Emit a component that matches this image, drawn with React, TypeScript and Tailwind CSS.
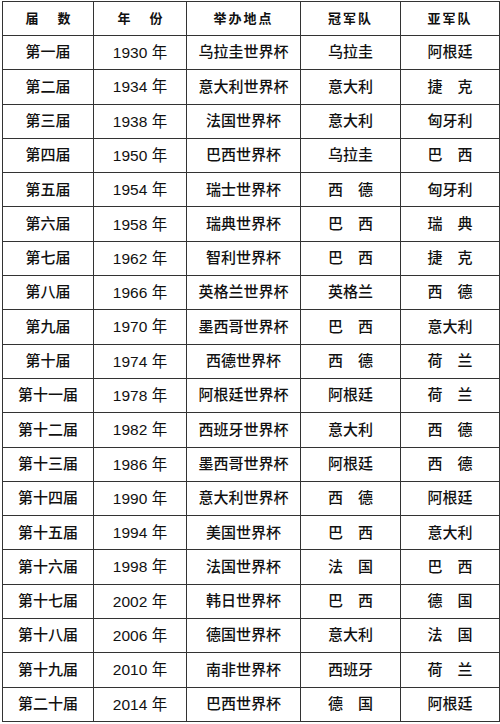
const rows: [string, string, string, string, string][] = [
  ["第一届", "1930", "乌拉圭世界杯", "乌拉圭", "阿根廷"],
  ["第二届", "1934", "意大利世界杯", "意大利", "捷　克"],
  ["第三届", "1938", "法国世界杯", "意大利", "匈牙利"],
  ["第四届", "1950", "巴西世界杯", "乌拉圭", "巴　西"],
  ["第五届", "1954", "瑞士世界杯", "西　德", "匈牙利"],
  ["第六届", "1958", "瑞典世界杯", "巴　西", "瑞　典"],
  ["第七届", "1962", "智利世界杯", "巴　西", "捷　克"],
  ["第八届", "1966", "英格兰世界杯", "英格兰", "西　德"],
  ["第九届", "1970", "墨西哥世界杯", "巴　西", "意大利"],
  ["第十届", "1974", "西德世界杯", "西　德", "荷　兰"],
  ["第十一届", "1978", "阿根廷世界杯", "阿根廷", "荷　兰"],
  ["第十二届", "1982", "西班牙世界杯", "意大利", "西　德"],
  ["第十三届", "1986", "墨西哥世界杯", "阿根廷", "西　德"],
  ["第十四届", "1990", "意大利世界杯", "西　德", "阿根廷"],
  ["第十五届", "1994", "美国世界杯", "巴　西", "意大利"],
  ["第十六届", "1998", "法国世界杯", "法　国", "巴　西"],
  ["第十七届", "2002", "韩日世界杯", "巴　西", "德　国"],
  ["第十八届", "2006", "德国世界杯", "意大利", "法　国"],
  ["第十九届", "2010", "南非世界杯", "西班牙", "荷　兰"],
  ["第二十届", "2014", "巴西世界杯", "德　国", "阿根廷"],
];

const cell = "border border-[#333] text-center align-middle p-0";

export default function App() {
  return (
    <div className="w-[500px] h-[724px] bg-white overflow-hidden pt-[1px] pl-[2px] font-['Liberation_Sans','Noto_Sans_CJK_SC',sans-serif] text-[#111]">
      <table className="table-fixed border-collapse w-[497px]">
        <colgroup>
          <col className="w-[91px]" />
          <col className="w-[93px]" />
          <col className="w-[114px]" />
          <col className="w-[100px]" />
          <col className="w-[99px]" />
        </colgroup>
        <thead>
          <tr className="h-[34px] text-[13px] font-black">
            <th className={cell}>
              <span>届</span>
              <span className="ml-[19px]">数</span>
            </th>
            <th className={cell}>
              <span>年</span>
              <span className="ml-[19px]">份</span>
            </th>
            <th className={`${cell} tracking-[2px]`}>举办地点</th>
            <th className={`${cell} tracking-[2px]`}>冠军队</th>
            <th className={`${cell} tracking-[2px]`}>亚军队</th>
          </tr>
        </thead>
        <tbody className="text-[15px] font-medium">
          {rows.map(([term, year, host, champ, runner]) => (
            <tr key={term} className="h-[34.3px]">
              <td className={cell}>{term}</td>
              <td className={`${cell} text-[15.5px] font-normal`}>{year} 年</td>
              <td className={cell}>{host}</td>
              <td className={cell}>{champ}</td>
              <td className={cell}>{runner}</td>
            </tr>
          ))}
        </tbody>
      </table>
    </div>
  );
}
